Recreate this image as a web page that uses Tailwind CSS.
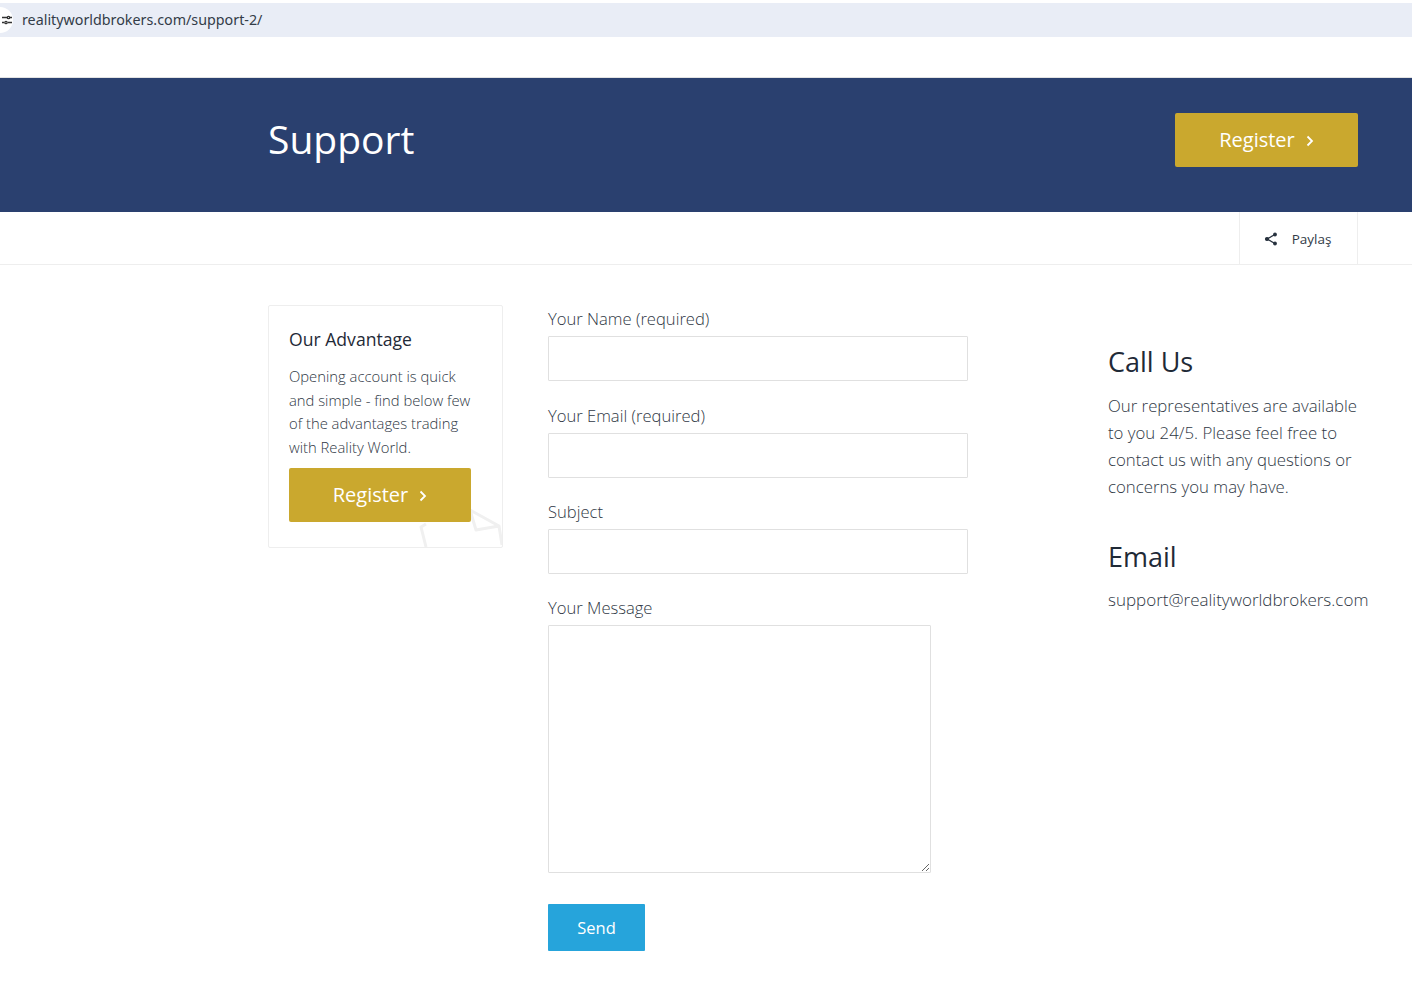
<!DOCTYPE html>
<html lang="en">
<head>
    <meta charset="UTF-8">
    <meta name="viewport" content="width=device-width, initial-scale=1.0">
    <title>Support</title>
    <script src="https://cdn.jsdelivr.net/npm/@tailwindcss/browser@4"></script>
</head>
<body class="bg-white font-['Open_Sans',sans-serif] text-[#1f2a37] overflow-hidden">
    <!-- address bar -->
    <div class="pt-[3px] h-[78px] border-b border-[#e3e3e3]">
        <div class="h-[34px] bg-[#e9edf6] flex items-center overflow-hidden">
            <div class="w-[26px] h-[26px] rounded-full bg-white -ml-[13px] flex items-center justify-end pr-[1px] shrink-0">
                <svg width="10" height="10" viewBox="0 0 10 10" fill="none" stroke="#333" stroke-width="1.3"><path d="M0 2.5h5M8 2.5h2M0 7.5h2M6 7.5h4"/><circle cx="6.5" cy="2.5" r="1.2"/><circle cx="4" cy="7.5" r="1.2"/></svg>
            </div>
            <span class="ml-[9px] font-['Noto_Sans',sans-serif] text-[14.300px] text-[#333c48]">realityworldbrokers.com/support-2/</span>
        </div>
    </div>

    <!-- page title -->
    <div class="h-[134px] bg-[#2a406f] flex items-center justify-between pl-[268px] pr-[54px] pb-[10px]">
        <h1 class="text-[39px] text-white -mt-[2px]">Support</h1>
        <a class="w-[183px] h-[54px] rounded-[2px] bg-[#caa82e] text-white text-[20px] font-medium flex items-center justify-center gap-[11px]">
            Register
            <svg class="mt-[2px]" width="8" height="12" viewBox="0 0 8 12" fill="none" stroke="white" stroke-width="1.8"><path d="M1.5 1.5 6 6l-4.500 4.500"/></svg>
        </a>
    </div>

    <!-- share bar -->
    <div class="h-[53px] border-b border-[#eeeeee] flex justify-end pr-[54px]">
        <div class="w-[119px] pr-[2px] border-x border-[#eeeeee] flex items-center justify-center gap-[14px] text-[13.5px] text-[#333c48]">
            <svg class="mt-[1px]" width="14" height="14" viewBox="0 0 14 14" fill="#26303d" stroke="#26303d" stroke-width="1.2"><path d="M11 2.500 3 7l8 4.500" fill="none"/><circle cx="11" cy="2.500" r="1.300"/><circle cx="3" cy="7" r="1.500"/><circle cx="11" cy="11.500" r="1.300"/></svg>
            <span class="mt-[2px]">Paylaş</span>
        </div>
    </div>

    <main class="flex pl-[268px]">
        <!-- advantage card -->
        <aside class="relative overflow-hidden w-[235px] h-[243px] mt-[40px] border border-[#eeeeee] rounded-[2px] pt-[21px] pl-[20px]">
            <svg class="absolute right-0 bottom-0" width="85" height="44" viewBox="0 0 85 44" fill="none" stroke="#f0f0f0" stroke-width="3" stroke-linejoin="round"><path d="M9 21 4 24l5 20M53 7l6 20 23-4 3 19M53 7l29 16"/></svg>
            <h3 class="relative text-[17.600px] leading-[24px] text-[#1f2a37]">Our Advantage</h3>
            <p class="relative mt-[14.300px] w-[190px] text-[14.800px] font-light leading-[23.400px] text-[#2f3845]">Opening account is quick and simple - find below few of the advantages trading with Reality World.</p>
            <a class="relative mt-[8.700px] w-[182px] h-[54px] rounded-[2px] bg-[#caa82e] text-white text-[20px] font-medium flex items-center justify-center gap-[11px]">
                Register
                <svg class="mt-[2px]" width="8" height="12" viewBox="0 0 8 12" fill="none" stroke="white" stroke-width="1.8"><path d="M1.5 1.5 6 6l-4.500 4.500"/></svg>
            </a>
        </aside>

        <!-- contact form -->
        <form class="ml-[45px] w-[420px] pt-[42px] text-[16.600px] font-light text-[#2f3845]">
            <label class="block leading-[24px]">Your Name (required)</label>
            <input class="block mt-[5px] w-full h-[45px] border border-[#e0e0e0] rounded-[1px]">
            <label class="block mt-[23px] leading-[24px]">Your Email (required)</label>
            <input class="block mt-[5px] w-full h-[45px] border border-[#e0e0e0] rounded-[1px]">
            <label class="block mt-[22px] leading-[24px]">Subject</label>
            <input class="block mt-[5px] w-full h-[45px] border border-[#e0e0e0] rounded-[1px]">
            <label class="block mt-[22px] leading-[24px]">Your Message</label>
            <textarea class="block mt-[5px] w-[383px] h-[248px] border border-[#e0e0e0] rounded-[1px] resize-y"></textarea>
            <button type="button" class="block mt-[31px] w-[97px] h-[47px] pt-[1px] rounded-[1px] bg-[#26a4db] text-white font-normal text-[16.500px]">Send</button>
        </form>

        <!-- contact details -->
        <section class="ml-[140px] pt-[79px] w-[290px]">
            <h2 class="text-[27px] leading-[36px] text-[#1f2a37]">Call Us</h2>
            <p class="mt-[12px] w-[262px] text-[16.800px] font-light leading-[27px] text-[#2f3845]">Our representatives are available to you 24/5. Please feel free to contact us with any questions or concerns you may have.</p>
            <h2 class="mt-[39px] text-[27px] leading-[36px] text-[#1f2a37]">Email</h2>
            <p class="mt-[11px] text-[17px] font-light leading-[27px] text-[#2f3845]">support@realityworldbrokers.com</p>
        </section>
    </main>
</body>
</html>
